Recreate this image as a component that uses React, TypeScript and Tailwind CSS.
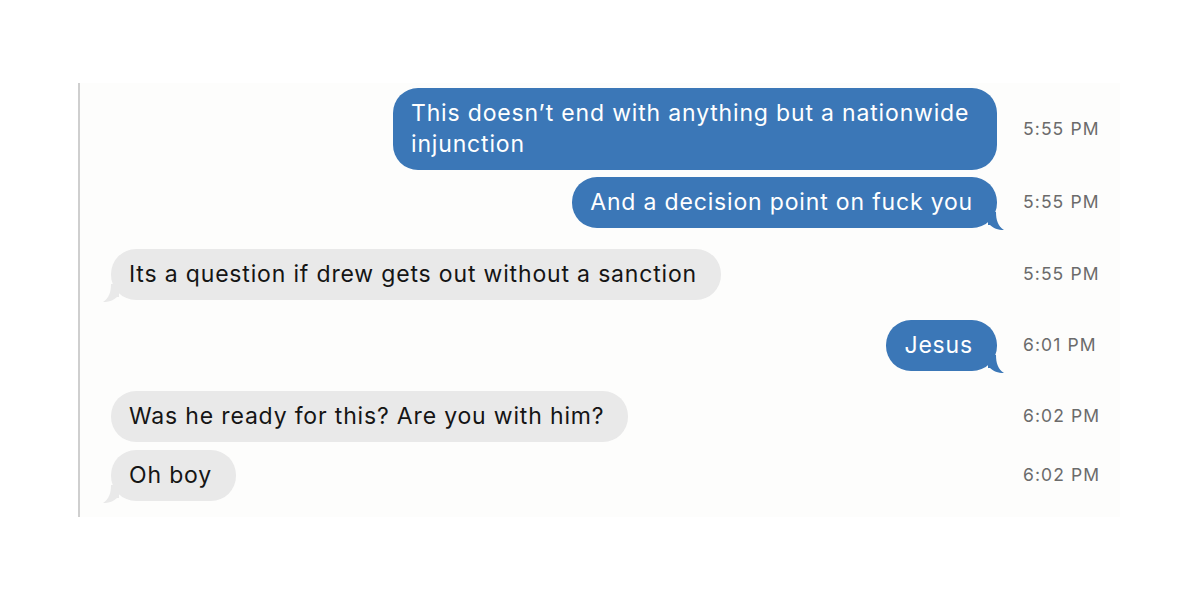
import React from "react";

type Msg = { text: string; time: string; me: boolean; tail: boolean; gap: string };

const messages: Msg[] = [
  { text: "This doesn\u2019t end with anything but a nationwide injunction", time: "5:55 PM", me: true, tail: false, gap: "" },
  { text: "And a decision point on fuck you", time: "5:55 PM", me: true, tail: true, gap: "mt-[7px]" },
  { text: "Its a question if drew gets out without a sanction", time: "5:55 PM", me: false, tail: true, gap: "mt-[21px]" },
  { text: "Jesus", time: "6:01 PM", me: true, tail: true, gap: "mt-[20px]" },
  { text: "Was he ready for this? Are you with him?", time: "6:02 PM", me: false, tail: false, gap: "mt-[20px]" },
  { text: "Oh boy", time: "6:02 PM", me: false, tail: true, gap: "mt-[8px]" },
];

function Tail({ me }: { me: boolean }) {
  if (me) {
    return (
      <svg className="absolute right-[-7px] bottom-[-2px]" width="16" height="18" viewBox="0 0 16 18">
        <path d="M0 0 L8 0 C8 8 10 14 16 18 C10 18 5 16 2 13 L0 13 Z" fill="#3b77b7" />
      </svg>
    );
  }
  return (
    <svg className="absolute left-[-8px] bottom-[-2px]" width="16" height="18" viewBox="0 0 16 18">
      <path d="M16 0 L8 0 C8 8 6 14 0 18 C6 18 11 16 14 13 L16 13 Z" fill="#e9e9e9" />
    </svg>
  );
}

export default function App() {
  return (
    <div className="w-[1200px] h-[600px] bg-white pt-[83px]" style={{ fontFamily: "Inter, 'Liberation Sans', sans-serif" }}>
      <div className="ml-[78px] w-[1042px] h-[434px] pt-[5px] border-l-2 border-[#cfcfcf] bg-[#fdfdfc]">
        {messages.map((m, i) => (
          <div key={i} className={`flex items-center ${m.gap}`}>
            <div className={`flex-1 flex pr-[26px] pl-[31px] ${m.me ? "justify-end" : "justify-start"}`}>
              <div
                className={`relative rounded-[25px] pl-[18px] pr-[24px] py-[10px] text-[23px] leading-[31px] tracking-[0.83px] ${
                  i === 0 ? "w-[604px]" : "whitespace-nowrap"
                } ${m.me ? "bg-[#3b77b7] text-white" : "bg-[#e9e9e9] text-[#151515]"}`}
              >
                {m.tail && <Tail me={m.me} />}
                <span className="relative">{m.text}</span>
              </div>
            </div>
            <div className="w-[97px] text-[17.5px] tracking-[1.1px] text-[#6b6b6b]">{m.time}</div>
          </div>
        ))}
      </div>
    </div>
  );
}
